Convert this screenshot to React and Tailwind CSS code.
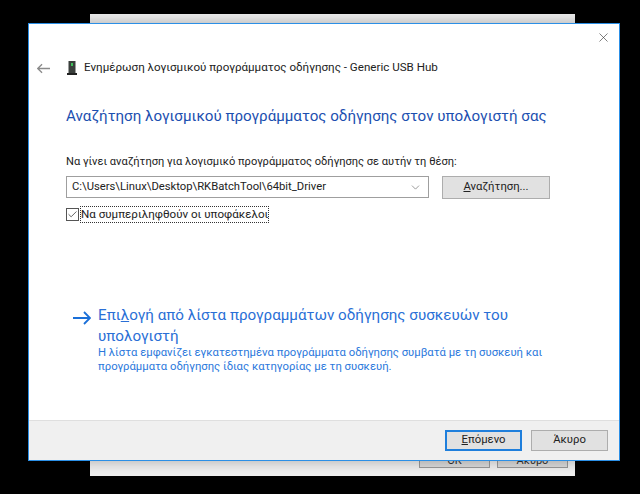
import { Check, ChevronDown, X } from 'lucide-react';

function UsbIcon() {
  return (
    <svg width="10" height="14" viewBox="0 0 10 14" className="shrink-0">
      <rect x="1.5" y="0" width="7" height="12" fill="#3a3f3c" />
      <rect x="4" y="2" width="2" height="3" fill="#3fbf5a" />
      <rect x="0" y="12" width="10" height="2" fill="#222" />
    </svg>
  );
}

function Arrow({ width, height, color, strokeWidth, d }) {
  return (
    <svg width={width} height={height} viewBox="0 0 18 14" fill="none" stroke={color} strokeWidth={strokeWidth} className="shrink-0">
      <path d={d} />
    </svg>
  );
}

export default function App() {
  return (
    <div className="relative w-[640px] h-[494px] bg-black overflow-hidden font-['Roboto',sans-serif]">
      {/* window behind */}
      <div className="absolute left-[90px] top-[14px] w-[485px] h-[462px] bg-[#f0f0f0]">
        <div className="absolute left-[329px] top-[434px] w-[71px] h-[20px] bg-[#dcdcdc] border border-[#9a9a9a] text-[11px] text-[#333333] text-center leading-[24px]">OK</div>
        <div className="absolute left-[407px] top-[434px] w-[71px] h-[20px] bg-[#dcdcdc] border border-[#9a9a9a] text-[11px] text-[#333333] text-center leading-[24px]">Άκυρο</div>
      </div>

      {/* front window */}
      <div className="absolute left-[28px] top-[23px] w-[592px] h-[438px] bg-white border border-[#2b8fe6] flex flex-col shadow-[0_0_14px_rgba(0,0,0,0.3)]">
        <div className="h-[26px] flex justify-end pr-[8px] pt-[6px]">
          <X size={15} strokeWidth={1} className="text-[#333333]" />
        </div>

        <div className="flex items-center h-[36px] pl-[8px]">
          <Arrow width={13} height={11} color="#8a8a8a" strokeWidth={1.8} d="M18 7H1M7 1L1 7l6 6" />
          <div className="ml-[17px]"><UsbIcon /></div>
          <span className="ml-[7px] text-[11.6px] text-[#222222]">Ενημέρωση λογισμικού προγράμματος οδήγησης - Generic USB Hub</span>
        </div>

        <div className="flex-1 flex flex-col pl-[37px] pr-[40px]">
          <h1 className="mt-[19px] text-[15.15px] leading-[22px] text-[#1c4fb0] font-normal">Αναζήτηση λογισμικού προγράμματος οδήγησης στον υπολογιστή σας</h1>

          <p className="mt-[27px] text-[11.1px] leading-[16px] text-[#222222]">Να γίνει αναζήτηση για λογισμικό προγράμματος οδήγησης σε αυτήν τη θέση:</p>

          <div className="mt-[6px] flex items-start">
            <div className="w-[363px] h-[22px] border border-[#9f9f9f] bg-white flex items-center justify-between pl-[5px] pr-[6px] text-[11.25px] text-[#222222]">
              <span>C:\Users\Linux\Desktop\RKBatchTool\64bit_Driver</span>
              <ChevronDown size={13} strokeWidth={1.2} className="text-[#666666]" />
            </div>
            <button className="ml-[13px] w-[108px] h-[23px] bg-[#e1e1e1] border border-[#adadad] text-[11.3px] text-[#222222]"><span className="underline">Α</span>ναζήτηση...</button>
          </div>

          <label className="mt-[8px] flex items-center">
            <span className="w-[13px] h-[13px] border border-[#555555] bg-white flex items-center justify-center">
              <Check size={11} strokeWidth={1.8} className="text-[#444444]" />
            </span>
            <span className="ml-[2px] w-[187px] text-[11.6px] leading-[15px] text-[#222222] outline-1 outline-dotted outline-[#333333] whitespace-nowrap">Να συμπεριληφθούν οι υποφάκελοι</span>
          </label>

          <div className="mt-[83px] flex ml-[7px]">
            <div className="mt-[6px]"><Arrow width={18} height={14} color="#1a6fd8" strokeWidth={1.8} d="M0 7H17M11 1l6 6-6 6" /></div>
            <div className="ml-[7px] w-[460px]">
              <p className="text-[15.2px] leading-[21px] text-[#2a6fd6] w-[430px]">Επι<span className="underline">λ</span>ογή από λίστα προγραμμάτων οδήγησης συσκευών του υπολογιστή</p>
              <p className="-mt-[1px] text-[11.3px] leading-[14px] text-[#2a78dc]">Η λίστα εμφανίζει εγκατεστημένα προγράμματα οδήγησης συμβατά με τη συσκευή και προγράμματα οδήγησης ίδιας κατηγορίας με τη συσκευή.</p>
            </div>
          </div>
        </div>

        <div className="h-[40px] bg-[#f0f0f0] border-t border-[#dfdfdf] flex items-center justify-end gap-[9px] pr-[11px]">
          <button className="w-[77px] h-[21px] bg-[#e1e1e1] border-2 border-[#1f7fdc] text-[11.3px] text-[#222222]"><span className="underline">Ε</span>πόμενο</button>
          <button className="w-[77px] h-[21px] bg-[#e1e1e1] border border-[#adadad] text-[11.3px] text-[#222222]">Άκυρο</button>
        </div>
      </div>
    </div>
  );
}
